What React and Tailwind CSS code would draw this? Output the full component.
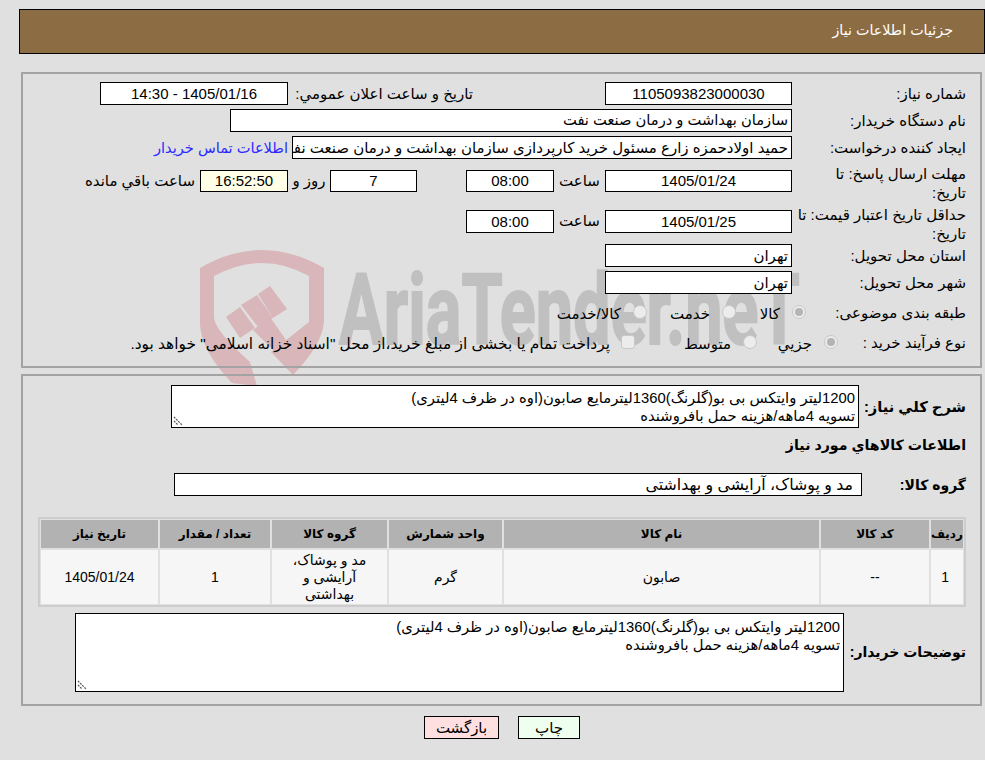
const FONT = "font-['Liberation_Sans','DejaVu_Sans',sans-serif]";

function Box({ className = "", children }) {
  return (
    <div className={`border border-black bg-white text-[15px] h-[23px] leading-[21px] overflow-hidden whitespace-nowrap shrink-0 ${className}`}>
      {children}
    </div>
  );
}

function Label({ className = "", children }) {
  return <div className={`text-[15px] text-black leading-[19px] shrink-0 ${className}`}>{children}</div>;
}

function Radio({ checked }) {
  return (
    <span className="mt-[4px] w-[14px] h-[14px] shrink-0 rounded-full bg-[#ececec] border border-[#c8c8c8] flex items-center justify-center">
      {checked && <span className="w-[8px] h-[8px] rounded-full bg-[#b4b4b4]"></span>}
    </span>
  );
}

function ResizeGrip() {
  return (
    <svg className="absolute left-[1px] bottom-[1px]" width="10" height="10" viewBox="0 0 10 10">
      <path d="M1 1l8 8M1 5l4 4" stroke="#555" strokeWidth="1.2" strokeDasharray="2 1" fill="none" />
    </svg>
  );
}

function Watermark() {
  return (
    <div dir="ltr" className="absolute left-[200px] top-[245px] pointer-events-none">
      <svg width="130" height="145" viewBox="200 245 130 145" fill="#d9b6b9">
        {/* shield */}
        <path fillRule="evenodd" d="M200 268 Q262 232 324 268 V322 Q322 345 293 375 L271 352 L309 322 V276 Q262 250 214 276 V318 Q216 332 250 362 L232 383 Q202 352 200 325 Z" />
        {/* gavel */}
        <path d="M226 317 L240 307 L255 328 L240 338 Z" />
        <path d="M241 305 L257 295 L273 318 L258 327 Z" />
        <path d="M258 294 L270 286 L287 309 L273 318 Z" />
        <path d="M253 330 L270 317 L300 360 L290 367 Z" />
        <path d="M250 362 L257 386 L232 383 Z" />
      </svg>
      <span className="absolute left-[139px] top-[11px] origin-left scale-x-[.68] whitespace-nowrap text-[#c0c0c0] [-webkit-text-stroke:2px_#c0c0c0] font-['Roboto',sans-serif] font-bold text-[98px] leading-[110px]">
        AriaTender.neT
      </span>
    </div>
  );
}

const columns = [
  { title: "ردیف", w: "w-[32px]" },
  { title: "کد کالا", w: "w-[108px]" },
  { title: "نام کالا", w: "w-[315px]" },
  { title: "واحد شمارش", w: "w-[113px]" },
  { title: "گروه کالا", w: "w-[115px]" },
  { title: "تعداد / مقدار", w: "w-[110px]" },
  { title: "تاریخ نیاز", w: "w-[117px]" },
];

const row = [
  "1",
  "--",
  "صابون",
  "گرم",
  "مد و پوشاک، آرایشی و بهداشتی",
  "1",
  "1405/01/24",
];

export default function App() {
  return (
    <div dir="rtl" className={`relative w-[985px] h-[760px] overflow-hidden bg-[#e0e0e0] pt-[9px] text-black ${FONT}`}>
      <Watermark />

      {/* header */}
      <div className="relative mr-0 ml-[19px] h-[45px] bg-[#8c6c42] border border-black flex items-center pr-[31px] pb-[2px] text-white text-[14.3px]">
        جزئیات اطلاعات نیاز
      </div>

      {/* details panel */}
      <div className="relative mr-[3px] ml-[21px] mt-[18px] h-[296px] border-2 border-[#a3a3a3] pt-[8px] pr-[14px]">
        <div className="flex flex-col">
          <div className="flex h-[27px]">
            <Label className="w-[174px] pt-[2px]">شماره نیاز:</Label>
            <Box className="w-[187px] text-center">1105093823000030</Box>
            <Label className="w-[317px] pt-[2px] pr-[132px] whitespace-nowrap">تاریخ و ساعت اعلان عمومي:</Label>
            <Box className="w-[188px] text-center">1405/01/16 - 14:30</Box>
          </div>
          <div className="flex h-[27px]">
            <Label className="w-[174px] pt-[2px]">نام دستگاه خریدار:</Label>
            <Box className="w-[562px] pr-[3px] !text-[14.7px]">سازمان بهداشت و درمان صنعت نفت</Box>
          </div>
          <div className="flex h-[34px]">
            <Label className="w-[174px] pt-[2px]">ایجاد کننده درخواست:</Label>
            <Box className="w-[500px] pr-[3px]">حمید اولادحمزه زارع مسئول خرید کارپردازی سازمان بهداشت و درمان صنعت نفت</Box>
            <span className="text-[14.6px] text-[#2a2aff] pr-[4px] pt-[2px] whitespace-nowrap">اطلاعات تماس خریدار</span>
          </div>
          <div className="flex h-[40px] items-start">
            <Label className="w-[174px] -mt-[6px]">مهلت ارسال پاسخ: تا<br />تاریخ:</Label>
            <Box className="w-[187px] !h-[22px] text-center !leading-[20px]">1405/01/24</Box>
            <span className="w-[51px] text-center text-[15px]">ساعت</span>
            <Box className="w-[88px] !h-[22px] text-center !leading-[20px]">08:00</Box>
            <span className="w-[49px]"></span>
            <Box className="w-[87px] !h-[22px] text-center !leading-[20px]">7</Box>
            <span className="w-[42px] text-center text-[15px]">روز و</span>
            <Box className="w-[88px] !h-[22px] !bg-[#ffffe8] text-center !leading-[20px]">16:52:50</Box>
            <span className="pr-[5px] text-[15px] whitespace-nowrap">ساعت باقي مانده</span>
          </div>
          <div className="flex h-[34px] items-start">
            <Label className="w-[174px] -mt-[5px]">حداقل تاریخ اعتبار قیمت: تا<br />تاریخ:</Label>
            <Box className="w-[187px] text-center">1405/01/25</Box>
            <span className="w-[51px] text-center text-[15px]">ساعت</span>
            <Box className="w-[88px] text-center">08:00</Box>
          </div>
          <div className="flex h-[27px]">
            <Label className="w-[174px] pt-[2px]">استان محل تحویل:</Label>
            <Box className="w-[187px] pr-[3px]">تهران</Box>
          </div>
          <div className="flex h-[30px]">
            <Label className="w-[174px] pt-[2px]">شهر محل تحویل:</Label>
            <Box className="w-[187px] pr-[3px]">تهران</Box>
          </div>
          <div className="flex h-[30px] text-[15px] leading-[19px] items-start whitespace-nowrap">
            <Label className="w-[160px] pt-[2px]">طبقه بندی موضوعی:</Label>
            <Radio checked />
            <span className="mr-[12px] mt-[3px] w-[20px]">کالا</span>
            <span className="mr-[24px]"><Radio /></span>
            <span className="mr-[12px] mt-[3px] w-[40px]">خدمت</span>
            <span className="mr-[23px]"><Radio /></span>
            <span className="mr-[12px] mt-[3px]">کالا/خدمت</span>
          </div>
          <div className="flex h-[26px] text-[15px] leading-[19px] items-start whitespace-nowrap">
            <Label className="w-[128px] pt-[2px]">نوع فرآیند خرید :</Label>
            <Radio checked />
            <span className="mr-[12px] mt-[3px] w-[35px]">جزیي</span>
            <span className="mr-[20px]"><Radio /></span>
            <span className="mr-[12px] mt-[3px] w-[45px]">متوسط</span>
            <span className="mr-[51px] mt-[4px] w-[14px] h-[14px] rounded-[3px] bg-[#ececec] border border-[#c8c8c8]"></span>
            <span className="mr-[11px] mt-[3px] text-[15.4px]">پرداخت تمام یا بخشی از مبلغ خرید،از محل "اسناد خزانه اسلامی" خواهد بود.</span>
          </div>
        </div>
      </div>

      {/* description panel */}
      <div className="relative mr-[3px] ml-[21px] mt-[6px] h-[332px] border-2 border-[#a3a3a3] pt-[9px] pr-[14px]">
        <div className="flex h-[43px]">
          <div className="w-[107px] pt-[11px] text-[14.7px] font-bold whitespace-nowrap">شرح کلي نیاز:</div>
          <div className="relative w-[688px] h-[43px] border border-black bg-white text-[14.8px] leading-[18px] pr-[3px] pt-[3px]">
            <p>1200لیتر وایتکس بی بو(گلرنگ)1360لیترمایع صابون(اوه در ظرف 4لیتری)</p>
            <p>تسویه 4ماهه/هزینه حمل بافروشنده</p>
            <ResizeGrip />
          </div>
        </div>
        <div className="mt-[6px] h-[24px] text-[14.2px] font-bold pt-[1px]">اطلاعات کالاهاي مورد نیاز</div>
        <div className="flex h-[23px] mt-[15px]">
          <div className="w-[104px] text-[14px] font-bold pt-[2px]">گروه کالا:</div>
          <Box className="w-[688px] pr-[8px] !text-[15.8px]">مد و پوشاک، آرایشی و بهداشتی</Box>
        </div>

        {/* items table */}
        <div className="mt-[21px] w-[928px] border-2 border-[#cdcdcd]">
          <table className="-m-[1px] border-separate border-spacing-[2px] w-[926px] table-fixed">
            <thead>
              <tr>
                {columns.map((c) => (
                  <th key={c.title} className={`${c.w} h-[28px] bg-[#b2b2b2] text-[12px] font-bold p-0`}>{c.title}</th>
                ))}
              </tr>
            </thead>
            <tbody>
              <tr>
                {row.map((v, i) => (
                  <td key={i} className="h-[54px] bg-[#f6f6f6] text-center text-[14px] leading-[17px] p-0 px-[18px]">{v}</td>
                ))}
              </tr>
            </tbody>
          </table>
        </div>

        <div className="flex mt-[6px]">
          <div className="w-[122px] pt-[29px] text-[14px] font-bold whitespace-nowrap">توضیحات خریدار:</div>
          <div className="relative w-[769px] h-[79px] border border-black bg-white text-[14.8px] leading-[18px] pr-[3px] pt-[4px]">
            <p>1200لیتر وایتکس بی بو(گلرنگ)1360لیترمایع صابون(اوه در ظرف 4لیتری)</p>
            <p>تسویه 4ماهه/هزینه حمل بافروشنده</p>
            <ResizeGrip />
          </div>
        </div>
      </div>

      {/* actions */}
      <div className="relative ml-[19px] flex justify-center gap-[19px] mt-[10px]">
        <button className="w-[62px] h-[23px] border border-black bg-[#efffef] text-[15px] leading-[20px]">چاپ</button>
        <button className="w-[75px] h-[23px] border border-black bg-[#ffdfdf] text-[15px] leading-[20px]">بازگشت</button>
      </div>
    </div>
  );
}
